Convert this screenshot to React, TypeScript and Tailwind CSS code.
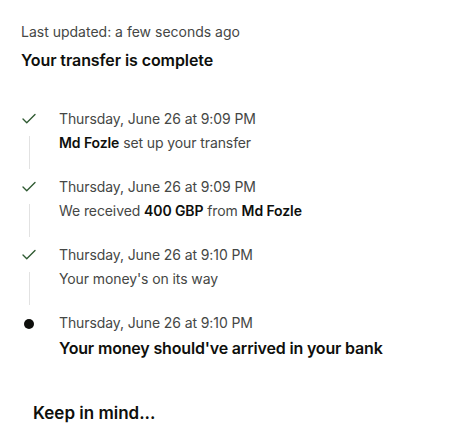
import { Check } from "lucide-react";

type Step = {
  date: string;
  body: React.ReactNode;
};

export default function App() {
  const steps: Step[] = [
    {
      date: "Thursday, June 26 at 9:09 PM",
      body: (
        <>
          <b className="font-semibold text-[#0e0f0c]">Md Fozle</b> set up your transfer
        </>
      ),
    },
    {
      date: "Thursday, June 26 at 9:09 PM",
      body: (
        <>
          We received <b className="font-semibold text-[#0e0f0c]">400 GBP</b> from{" "}
          <b className="font-semibold text-[#0e0f0c]">Md Fozle</b>
        </>
      ),
    },
    {
      date: "Thursday, June 26 at 9:10 PM",
      body: <>Your money's on its way</>,
    },
  ];

  return (
    <div className="min-h-screen bg-white font-['Inter',sans-serif] text-[#0e0f0c]">
      <div className="pl-[21px] pt-[22px]">
        <p className="text-[14px] leading-[20px] text-[#454745]">Last updated: a few seconds ago</p>
        <h2 className="mt-[7px] text-[16px] font-semibold leading-[22px] tracking-[-0.08px]">
          Your transfer is complete
        </h2>

        <ol className="mt-[38px]">
          {steps.map((s, i) => (
            <li key={i} className="flex h-[68px]">
              <div className="mr-[22px] flex w-[16px] flex-col items-center">
                <Check className="mt-[1px] h-[18px] w-[18px] shrink-0 text-[#2f5a32]" strokeWidth={1.8} />
                <div className="mt-[8px] h-[33px] w-px bg-[#e2e2e2]" />
              </div>
              <div className="text-[14px] leading-[20px] tracking-[-0.1px] text-[#454745]">
                <p>{s.date}</p>
                <p className="mt-[4px]">{s.body}</p>
              </div>
            </li>
          ))}
          <li className="flex">
            <div className="mr-[22px] flex w-[16px] justify-center pt-[6px]">
              <span className="h-[10px] w-[10px] rounded-full bg-[#0e0f0c]" />
            </div>
            <div>
              <p className="text-[14px] leading-[20px] tracking-[-0.1px] text-[#454745]">
                Thursday, June 26 at 9:10 PM
              </p>
              <p className="mt-[4px] text-[16px] font-semibold leading-[22px] tracking-[-0.17px]">
                Your money should've arrived in your bank
              </p>
            </div>
          </li>
        </ol>

        <h3 className="mt-[42px] pl-[12px] text-[17px] font-semibold leading-[24px]">Keep in mind...</h3>
      </div>
    </div>
  );
}
